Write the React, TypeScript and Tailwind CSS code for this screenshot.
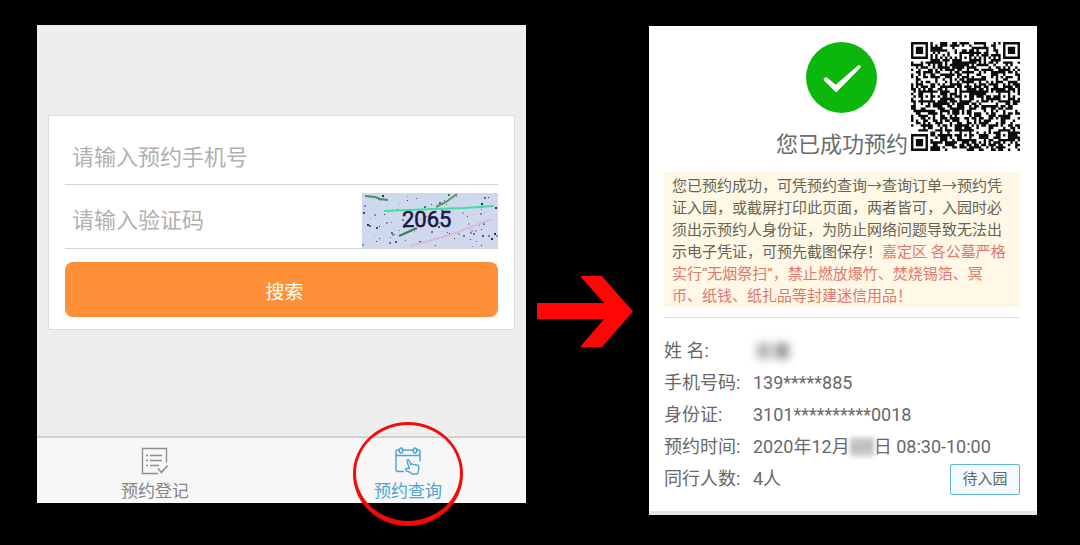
import React from 'react';

interface InfoRow {
  label: string;
  value: React.ReactNode;
}

// small deterministic generator, so the code and the noise stay the same on every render
const createRandom = (seed: number) => {
  let state = seed;
  return () => {
    state = (state * 1664525 + 1013904223) % 4294967296;
    return state / 4294967296;
  };
};

const QR_SIZE = 45;

const buildQrPath = () => {
  const random = createRandom(20201204);
  const cells: boolean[][] = [];
  for (let y = 0; y < QR_SIZE; y++) {
    cells.push([]);
    for (let x = 0; x < QR_SIZE; x++) {
      cells[y].push(random() > 0.46);
    }
  }

  const square = (cx: number, cy: number, radius: number) => {
    for (let dy = -radius; dy <= radius; dy++) {
      for (let dx = -radius; dx <= radius; dx++) {
        const x = cx + dx;
        const y = cy + dy;
        if (x < 0 || y < 0 || x >= QR_SIZE || y >= QR_SIZE) continue;
        const ring = Math.max(Math.abs(dx), Math.abs(dy));
        cells[y][x] = radius === 4 ? ring !== 2 && ring !== 4 : ring !== 1;
      }
    }
  };

  // timing lines
  for (let i = 7; i < QR_SIZE - 7; i++) {
    cells[6][i] = i % 2 === 0;
    cells[i][6] = i % 2 === 0;
  }
  // alignment marks
  [[22, 6], [6, 22], [22, 22], [38, 22], [22, 38], [38, 38]].forEach(([x, y]) => square(x, y, 2));
  // corner finders
  [[3, 3], [41, 3], [3, 41]].forEach(([x, y]) => square(x, y, 4));

  return cells
    .flatMap((row, y) => row.map((on, x) => (on ? `M${x} ${y}h1v1h-1z` : '')))
    .join('');
};

const qrPath = buildQrPath();

const QrCode: React.FC = () => (
  <svg viewBox="0 0 45 45" className="h-[109px] w-[109px]" role="img" aria-label="二维码">
    <path d={qrPath} fill="#0c0c0c" />
  </svg>
);

const noiseColors = ['#2c2c54', '#4a4a7a', '#8a6a9a', '#3f7a5a', '#c79ac0', '#7d8fc0'];

const buildNoise = () => {
  const random = createRandom(2065);
  return Array.from({ length: 95 }, (_, i) => ({
    x: Math.round(random() * 134),
    y: Math.round(random() * 53),
    size: random() > 0.6 ? 2 : 1,
    color: noiseColors[i % noiseColors.length],
  }));
};

const noise = buildNoise();

const Captcha: React.FC = () => (
  <svg viewBox="0 0 136 55" className="h-[55px] w-[136px] shrink-0">
    <rect width="136" height="55" fill="#cfd9ee" />
    {noise.map((dot, i) => (
      <rect key={i} x={dot.x} y={dot.y} width={dot.size} height={dot.size} fill={dot.color} />
    ))}
    <path d="M3 3l10 1 5 2 8 1" stroke="#3f8f68" strokeWidth="2" fill="none" />
    <path d="M74 14l10-5 11-8" stroke="#5b9465" strokeWidth="2" fill="none" />
    <path d="M37 43l18-8" stroke="#39795c" strokeWidth="2" fill="none" />
    <path d="M48 53l40-11 42-16" stroke="#dcb9d8" strokeWidth="2" fill="none" />
    <path d="M22 18l50-2 30-1 30-2" stroke="#45dca6" strokeWidth="2" fill="none" />
    <text
      x="40"
      y="34"
      fontSize="22"
      fontFamily="Roboto, 'Liberation Sans', sans-serif"
      fill="#1b1748"
      stroke="#1b1748"
      strokeWidth="0.6"
    >
      2065
    </text>
  </svg>
);

const RegisterIcon: React.FC = () => (
  <svg viewBox="0 0 28 28" className="h-7 w-7" fill="none" stroke="#8f8f8f" strokeWidth="1.4">
    <path d="M17 26.5H1.5v-25h24v14" />
    <path d="M9 8.5h12M9 13.5h12M9 18.5h9" />
    <path d="M5 8.5h2M5 13.5h2M5 18.5h2" />
    <path d="M17 21.5l3.5 4 6-7" strokeWidth="1.8" />
  </svg>
);

const QueryIcon: React.FC = () => (
  <svg
    viewBox="0 0 28 28"
    className="h-7 w-7"
    fill="none"
    stroke="#4ba6cf"
    strokeWidth="1.4"
    strokeLinejoin="round"
    strokeLinecap="round"
  >
    <path d="M9.5 24.5H4a2 2 0 0 1-2-2V5a2 2 0 0 1 2-2h1M9 3h10M23 3h1a2 2 0 0 1 2 2v9" />
    <path d="M2 8.5h24" />
    <ellipse cx="7" cy="3.5" rx="1.8" ry="2.5" />
    <ellipse cx="21" cy="3.5" rx="1.8" ry="2.5" />
    <path d="M15.5 21.5l-2.6-7.3c-.4-1.3 1.5-2 2.1-.8l1.9 4.100c1-1 2.200-.6 2.600.2 1-.7 2-.3 2.400.5 1.200-.5 2.500.1 2.800 1.500.5 2 .3 3.500-.6 5.300l-1 2h-5l-1.600-1.500-4.200-1.700c-1.300-.8-.5-2.500.9-2.300z" />
  </svg>
);

// hand drawn ring, a little heavier at the bottom
const RedRing: React.FC = () => (
  <svg
    viewBox="0 0 110 104"
    className="pointer-events-none absolute -top-4 left-1/2 h-[104px] w-[110px] -translate-x-1/2"
  >
    <path
      fillRule="evenodd"
      fill="#f50a0a"
      d="M55 0a55 52 0 1 1 0 104a55 52 0 1 1 0-104zM55 3a52 48 0 1 0 0 96a52 48 0 1 0 0-96z"
    />
  </svg>
);

const SearchPanel: React.FC = () => (
  <section className="flex flex-col bg-[#eeeeee] pt-[90px]">
    <form
      className="mx-[11px] border border-[#dcdcdc] bg-white px-4 pt-[15px] pb-3"
      onSubmit={(e) => e.preventDefault()}
    >
      <div className="border-b border-[#d4d4d4] px-[7px]">
        <input
          type="tel"
          aria-label="预约手机号"
          placeholder="请输入预约手机号"
          className="h-[53px] w-full bg-transparent text-[22px] outline-none placeholder:text-[#b0b0b0]"
        />
      </div>
      <div className="flex items-end border-b border-[#d4d4d4] pt-2 pl-[7px]">
        <input
          type="text"
          aria-label="验证码"
          placeholder="请输入验证码"
          className="h-[55px] w-full min-w-0 bg-transparent text-[22px] outline-none placeholder:text-[#b0b0b0]"
        />
        <Captcha />
      </div>
      <button
        type="submit"
        className="mt-[13px] h-[55px] w-full rounded-lg bg-[#ff9038] pt-2 pl-1.5 text-[19px] text-white"
      >
        搜索
      </button>
    </form>

    <nav className="mt-auto flex h-[67px] justify-between border-t-2 border-[#d2d2d2] bg-[#f7f7f7] px-[84px] text-[17px] leading-6">
      <button type="button" className="flex flex-col items-center pt-[9px] text-[#858585]">
        <RegisterIcon />
        <span className="pt-1">预约登记</span>
      </button>
      <button type="button" className="relative flex flex-col items-center pt-[9px] text-[#4ba6cf]">
        <QueryIcon />
        <span className="pt-1">预约查询</span>
        <RedRing />
      </button>
    </nav>
  </section>
);

const rows: InfoRow[] = [
  {
    label: '姓 名:',
    value: (
      <span className="flex h-8 items-center gap-1 pl-1 blur-[4px]">
        <span className="h-4 w-[14px] bg-[#b4b4b4]" />
        <span className="h-4 w-[14px] bg-[#9c9c9c]" />
      </span>
    ),
  },
  { label: '手机号码:', value: '139*****885' },
  { label: '身份证:', value: '3101**********0018' },
  {
    label: '预约时间:',
    value: (
      <span className="flex items-center">
        2020年12月
        <span className="h-5 w-6 bg-linear-to-b from-[#d2d2d2] via-[#bcbcbc] to-[#d8d8d8] blur-[2px]" />
        日 08:30-10:00
      </span>
    ),
  },
  { label: '同行人数:', value: '4人' },
];

const ResultPanel: React.FC = () => (
  <section className="border-b-4 border-[#e4e4e4] bg-white pt-4 pr-[17px] pb-4 pl-[15px]">
    <div className="grid grid-cols-[1fr_auto_1fr]">
      <div className="col-start-2 flex flex-col items-center">
        <svg viewBox="0 0 71 71" className="h-[71px] w-[71px]">
          <circle cx="35.5" cy="35.5" r="35.5" fill="#0cb70c" />
          <path
            d="M18 38.5a2.2 2.2 0 0 1 3.3-2.8l8.4 7.1 22.3-19.2a1.6 1.6 0 0 1 2.2 2.4L31.7 49a2 2 0 0 1-3 0z"
            fill="#fff"
          />
        </svg>
        <h1 className="pt-4 text-[22px] leading-8 text-[#6b6b6b]">您已成功预约</h1>
      </div>
      <div className="justify-self-end">
        <QrCode />
      </div>
    </div>

    <p className="mt-[11px] bg-[#fff8e7] px-2 pt-[3px] text-[15px] leading-[22px] text-[#666455]">
      您已预约成功，可凭预约查询→查询订单→预约凭证入园，或截屏打印此页面，两者皆可，入园时必须出示预约人身份证，为防止网络问题导致无法出示电子凭证，可预先截图保存！
      <span className="text-[#e0776c]">
        嘉定区 各公墓严格实行“无烟祭扫”，禁止燃放爆竹、焚烧锡箔、冥币、纸钱、纸扎品等封建迷信用品！
      </span>
    </p>

    <div className="mt-[10px] border-t border-[#dddddd] pt-[17px]">
      <div className="flex items-end justify-between">
        <dl className="grid grid-cols-[89px_auto] text-[18px] leading-8 whitespace-nowrap text-[#686868]">
          {rows.map((row) => (
            <React.Fragment key={row.label}>
              <dt>{row.label}</dt>
              <dd>{row.value}</dd>
            </React.Fragment>
          ))}
        </dl>
        <button
          type="button"
          className="-ml-20 h-[31px] w-[70px] rounded-xs border border-[#62b5da] bg-[#f3f9fe] text-[15px] text-[#666666]"
        >
          待入园
        </button>
      </div>
    </div>
  </section>
);

const App: React.FC = () => {
  return (
    <main className="grid min-h-screen grid-cols-[489fr_123fr_388fr] items-start bg-black pt-[25px] pr-[43px] pb-7 pl-[37px] font-[Roboto,'Noto_Sans_CJK_SC',sans-serif]">
      <div className="grid min-h-[478px]">
        <SearchPanel />
      </div>
      <div className="flex justify-center pt-[251px] pr-1.5">
        <svg viewBox="0 0 96 71" className="h-[71px] w-24">
          <path d="M0 27h67L43 0h22l31 35.5L65 71H43l24-28H0z" fill="#ff0505" />
        </svg>
      </div>
      <div className="pt-px">
        <ResultPanel />
      </div>
    </main>
  );
};

export default App;
